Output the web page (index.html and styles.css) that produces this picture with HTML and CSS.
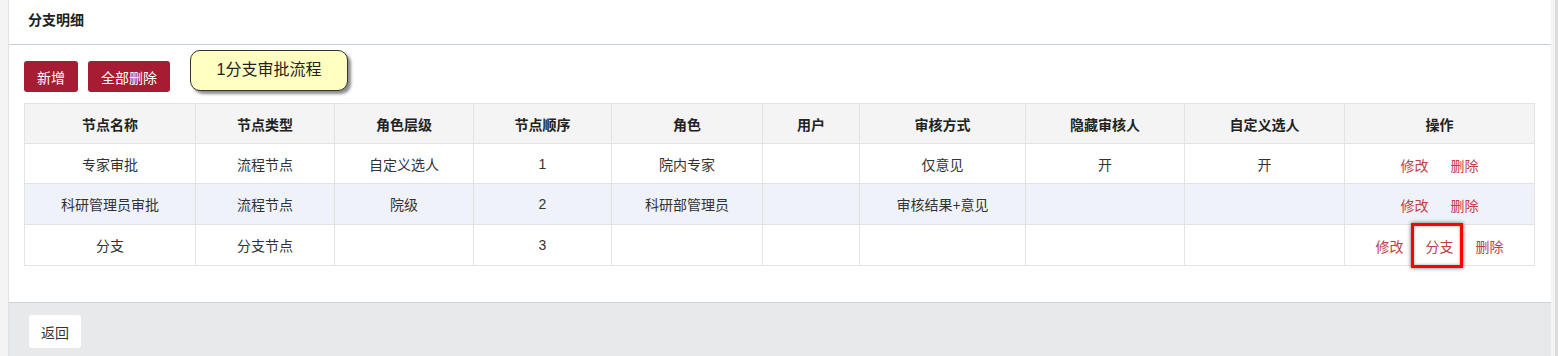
FILE: index.html
```html
<!DOCTYPE html>
<html lang="zh-CN">
<head>
    <meta charset="UTF-8">
    <meta name="viewport" content="width=device-width, initial-scale=1.0">
    <title>分支明细</title>
    <link rel="stylesheet" href="styles.css">
</head>
<body>
    <div class="panel">
        <div class="panel-head">分支明细</div>

        <div class="panel-body">
            <div class="toolbar">
                <button class="btn-primary">新增</button>
                <button class="btn-primary">全部删除</button>
                <div class="flow-tip">1分支审批流程</div>
            </div>

            <table class="grid">
                <colgroup>
                    <col style="width: 171px">
                    <col style="width: 139px">
                    <col style="width: 139px">
                    <col style="width: 138px">
                    <col style="width: 151px">
                    <col style="width: 97px">
                    <col style="width: 166px">
                    <col style="width: 159px">
                    <col style="width: 160px">
                    <col style="width: 190px">
                </colgroup>
                <thead>
                    <tr>
                        <th>节点名称</th>
                        <th>节点类型</th>
                        <th>角色层级</th>
                        <th>节点顺序</th>
                        <th>角色</th>
                        <th>用户</th>
                        <th>审核方式</th>
                        <th>隐藏审核人</th>
                        <th>自定义选人</th>
                        <th>操作</th>
                    </tr>
                </thead>
                <tbody>
                    <tr>
                        <td>专家审批</td>
                        <td>流程节点</td>
                        <td>自定义选人</td>
                        <td>1</td>
                        <td>院内专家</td>
                        <td></td>
                        <td>仅意见</td>
                        <td>开</td>
                        <td>开</td>
                        <td>
                            <div class="ops">
                                <a href="#">修改</a>
                                <a href="#">删除</a>
                            </div>
                        </td>
                    </tr>
                    <tr class="alt">
                        <td>科研管理员审批</td>
                        <td>流程节点</td>
                        <td>院级</td>
                        <td>2</td>
                        <td>科研部管理员</td>
                        <td></td>
                        <td>审核结果+意见</td>
                        <td></td>
                        <td></td>
                        <td>
                            <div class="ops">
                                <a href="#">修改</a>
                                <a href="#">删除</a>
                            </div>
                        </td>
                    </tr>
                    <tr>
                        <td>分支</td>
                        <td>分支节点</td>
                        <td></td>
                        <td>3</td>
                        <td></td>
                        <td></td>
                        <td></td>
                        <td></td>
                        <td></td>
                        <td>
                            <div class="ops">
                                <a href="#">修改</a>
                                <a href="#" class="marked">分支</a>
                                <a href="#">删除</a>
                            </div>
                        </td>
                    </tr>
                </tbody>
            </table>
        </div>

        <div class="panel-foot">
            <button class="btn-plain">返回</button>
        </div>
    </div>
</body>
</html>
```

FILE: styles.css
```css
html, body {
    height: 100%;
}
body {
    margin: 0;
    padding-left: 8px;
    background-color: #f4f4f4;
    border-right: 3px solid #dcdcdc;
    box-sizing: border-box;
    font-family: "Liberation Sans", "Noto Sans CJK SC", sans-serif;
    font-size: 14px;
    color: #333;
    overflow: hidden;
}
.panel {
    margin-right: 4px;
    min-height: 100%;
    background-color: #e8e9eb;
    border-left: 1px solid #e2e2e2;
    display: flex;
    flex-direction: column;
}
.panel-head {
    height: 44px;
    line-height: 40px;
    padding-left: 19px;
    font-weight: bold;
    color: #222;
    background-color: #fff;
    border-bottom: 1px solid #c3d4db;
}
.panel-body {
    background-color: #fff;
    padding: 16px 17px 36px 15px;
}
.toolbar {
    position: relative;
    height: 31px;
    margin-bottom: 11px;
    display: flex;
    gap: 10px;
}
button {
    font-family: inherit;
    font-size: 14px;
    cursor: pointer;
}
.btn-primary {
    height: 31px;
    padding: 0 13px;
    border: none;
    border-radius: 3px;
    background-color: #a61c32;
    color: #fff;
}
.btn-primary:hover {
    background-color: #8f1629;
}
/* yellow note floating next to the buttons */
.flow-tip {
    position: absolute;
    left: 166px;
    top: -11px;
    width: 156px;
    height: 39px;
    line-height: 38px;
    text-align: center;
    font-size: 16px;
    color: #222;
    background-color: #ffffc2;
    border: 1px solid #333;
    border-radius: 10px;
    box-shadow: 3px 3px 3px rgba(0,0,0,0.45);
}
.grid {
    width: 1510px;
    table-layout: fixed;
    border-collapse: collapse;
}
.grid th,
.grid td {
    height: 39px;
    padding: 0 6px;
    border: 1px solid #e3e3e3;
    text-align: center;
    vertical-align: middle;
}
.grid tbody tr + tr td {
    height: 40px;
}
.grid th {
    background-color: #f4f4f4;
    font-weight: bold;
    color: #222;
}
.grid tr.alt td {
    background-color: #eff2f9;
}
.ops {
    display: flex;
    justify-content: center;
    gap: 22px;
    padding-top: 2px;
}
.ops a {
    position: relative;
    color: #c0404a;
    text-decoration: none;
}
.ops a:hover {
    text-decoration: underline;
}
/* red frame drawn around the highlighted action */
.ops a.marked::after {
    content: "";
    position: absolute;
    left: -15px;
    right: -9px;
    top: -13px;
    bottom: -12px;
    border: 3px solid #ff0000;
    box-shadow: 0 0 4px rgba(0,0,0,0.6), inset 0 0 3px rgba(0,0,0,0.4);
}
.panel-foot {
    flex: 1;
    border-top: 1px solid #c8d6de;
    padding: 12px 20px;
}
.btn-plain {
    height: 33px;
    padding: 0 12px;
    border: none;
    border-radius: 3px;
    background-color: #fff;
    color: #333;
}
```
